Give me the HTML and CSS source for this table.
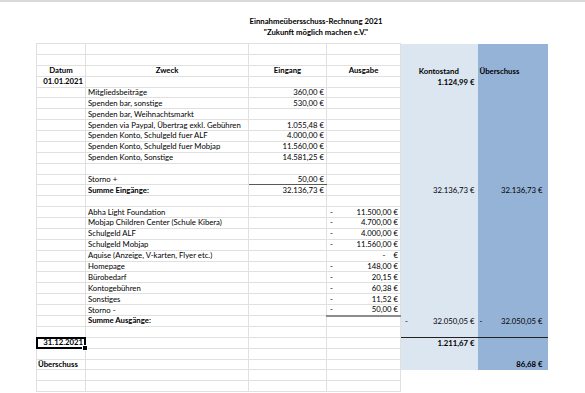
FILE: index.html
```html
<!DOCTYPE html>
<html lang="de">
<head>
  <meta charset="UTF-8">
  <title>Einnahmeüberschuss-Rechnung 2021</title>
  <link rel="stylesheet" href="styles.css">
</head>
<body>

  <div class="title">
    Einnahmeübersschuss-Rechnung 2021<br>
    "Zukunft möglich machen e.V."
  </div>

  <table class="sheet">
    <colgroup>
      <col class="w-datum">
      <col class="w-zweck">
      <col class="w-ein">
      <col class="w-aus">
      <col class="w-konto">
      <col class="w-ueber">
    </colgroup>
    <tr><td></td><td></td><td></td><td></td><td class="k"></td><td class="u"></td></tr>
    <tr><td></td><td></td><td></td><td></td><td class="k"></td><td class="u"></td></tr>
    <tr>
      <td class="c b">Datum</td><td class="c b">Zweck</td><td class="c b">Eingang</td><td class="c b">Ausgabe</td>
      <td class="k c b">Kontostand</td><td class="u b">Überschuss</td>
    </tr>
    <tr><td class="r b date">01.01.2021</td><td></td><td></td><td></td><td class="k r b">1.124,99 €</td><td class="u"></td></tr>
    <tr><td></td><td>Mitgliedsbeiträge</td><td class="ein">360,00 €</td><td></td><td class="k"></td><td class="u"></td></tr>
    <tr><td></td><td>Spenden bar, sonstige</td><td class="ein">530,00 €</td><td></td><td class="k"></td><td class="u"></td></tr>
    <tr><td></td><td>Spenden bar, Weihnachtsmarkt</td><td></td><td></td><td class="k"></td><td class="u"></td></tr>
    <tr><td></td><td>Spenden via Paypal, Übertrag exkl. Gebühren</td><td class="ein">1.055,48 €</td><td></td><td class="k"></td><td class="u"></td></tr>
    <tr><td></td><td>Spenden Konto, Schulgeld fuer ALF</td><td class="ein">4.000,00 €</td><td></td><td class="k"></td><td class="u"></td></tr>
    <tr><td></td><td>Spenden Konto, Schulgeld fuer Mobjap</td><td class="ein">11.560,00 €</td><td></td><td class="k"></td><td class="u"></td></tr>
    <tr><td></td><td>Spenden Konto, Sonstige</td><td class="ein">14.581,25 €</td><td></td><td class="k"></td><td class="u"></td></tr>
    <tr><td></td><td></td><td></td><td></td><td class="k"></td><td class="u"></td></tr>
    <tr><td></td><td>Storno +</td><td class="ein line-sum">50,00 €</td><td></td><td class="k"></td><td class="u"></td></tr>
    <tr>
      <td></td><td class="b">Summe Eingänge:</td><td class="ein">32.136,73 €</td><td></td>
      <td class="k r">32.136,73 €</td><td class="u r">32.136,73 €</td>
    </tr>
    <tr><td></td><td></td><td></td><td></td><td class="k"></td><td class="u"></td></tr>
    <tr><td></td><td>Abha Light Foundation</td><td></td><td class="aus"><span class="minus">-</span>11.500,00 €</td><td class="k"></td><td class="u"></td></tr>
    <tr><td></td><td>Mobjap Children Center (Schule Kibera)</td><td></td><td class="aus"><span class="minus">-</span>4.700,00 €</td><td class="k"></td><td class="u"></td></tr>
    <tr><td></td><td>Schulgeld ALF</td><td></td><td class="aus"><span class="minus">-</span>4.000,00 €</td><td class="k"></td><td class="u"></td></tr>
    <tr><td></td><td>Schulgeld Mobjap</td><td></td><td class="aus"><span class="minus">-</span>11.560,00 €</td><td class="k"></td><td class="u"></td></tr>
    <tr><td></td><td>Aquise (Anzeige, V-karten, Flyer etc.)</td><td></td><td class="aus"><span class="zero">-</span>€</td><td class="k"></td><td class="u"></td></tr>
    <tr><td></td><td>Homepage</td><td></td><td class="aus"><span class="minus">-</span>148,00 €</td><td class="k"></td><td class="u"></td></tr>
    <tr><td></td><td>Bürobedarf</td><td></td><td class="aus"><span class="minus">-</span>20,15 €</td><td class="k"></td><td class="u"></td></tr>
    <tr><td></td><td>Kontogebühren</td><td></td><td class="aus"><span class="minus">-</span>60,38 €</td><td class="k"></td><td class="u"></td></tr>
    <tr><td></td><td>Sonstiges</td><td></td><td class="aus"><span class="minus">-</span>11,52 €</td><td class="k"></td><td class="u"></td></tr>
    <tr><td></td><td>Storno -</td><td></td><td class="aus line-aus"><span class="minus">-</span>50,00 €</td><td class="k"></td><td class="u"></td></tr>
    <tr>
      <td></td><td class="b">Summe Ausgänge:</td><td></td><td></td>
      <td class="k r"><span class="minus k-minus">-</span>32.050,05 €</td>
      <td class="u r"><span class="minus">-</span>32.050,05 €</td>
    </tr>
    <tr><td></td><td></td><td></td><td></td><td class="k line-end"></td><td class="u line-end"></td></tr>
    <tr><td class="r b sel">31.12.2021</td><td></td><td></td><td></td><td class="k r b">1.211,67 €</td><td class="u"></td></tr>
    <tr><td></td><td></td><td></td><td></td><td class="k"></td><td class="u"></td></tr>
    <tr><td class="b label">Überschuss</td><td></td><td></td><td></td><td class="k"></td><td class="u r b">86,68 €</td></tr>
    <tr><td></td><td></td><td></td><td></td><td class="off"></td><td class="off"></td></tr>
    <tr><td></td><td></td><td></td><td></td><td class="off"></td><td class="off"></td></tr>
  </table>

</body>
</html>
```

FILE: styles.css
```css
* {
  box-sizing: border-box;
}

body {
  margin: 0;
  border-top: 2px solid #d9d9d9;
  font-family: Lato, 'Liberation Sans', sans-serif;
  font-size: 7.75px;
  color: #000;
  background: #fff;
}

.title {
  margin: 14px 0 5px 85px;
  width: 462px;
  height: 22px;
  text-align: center;
  font-weight: bold;
  line-height: 11px;
}

.sheet {
  margin-left: 36px;
  width: 511px;
  table-layout: fixed;
  border-collapse: collapse;
}

.w-datum { width: 49px; }
.w-zweck { width: 163px; }
.w-ein { width: 78px; }
.w-aus { width: 74px; }
.w-konto { width: 77px; }
.w-ueber { width: 70px; }

.sheet tr {
  height: 10.89px;
}

.sheet td {
  border: 1px solid #e0e0e0;
  padding: 0 2px;
  line-height: 9.5px;
  white-space: nowrap;
  overflow: visible;
  vertical-align: bottom;
}

.c { text-align: center; }
.r { text-align: right; }
.b { font-weight: bold; }

.sheet td.label {
  padding-left: 1px;
}

.sheet td.date {
  padding-right: 2px;
}

.sheet td.ein {
  text-align: right;
  padding-right: 2px;
}

.sheet td.aus {
  text-align: right;
  padding-left: 3px;
  padding-right: 2px;
}

.minus {
  float: left;
}

.zero {
  margin-right: 8px;
}

/* coloured columns, no gridlines */
.sheet td.k {
  background: #dce6f1;
  border: none;
  padding-right: 3px;
}

.sheet td.u {
  background: #95b3d7;
  border: none;
  padding-left: 2px;
  padding-right: 5px;
}

.sheet td.off {
  border: none;
  background: #fff;
}

.k-minus {
  margin-left: 2px;
}

.sheet td.line-sum {
  border-bottom: 1px solid #595959;
}

.sheet td.line-aus {
  border-bottom: 2px solid #8c8c8c;
}

.sheet td.line-end {
  border-bottom: 1px solid #222;
}

/* active cell */
.sel {
  position: relative;
}

.sel::before {
  content: '';
  position: absolute;
  top: -1px;
  left: -1px;
  right: -1px;
  bottom: -1px;
  border: 2px solid #000;
}

.sel::after {
  content: '';
  position: absolute;
  right: -3px;
  bottom: -3px;
  width: 4px;
  height: 4px;
  background: #000;
  border: 1px solid #fff;
}
```
